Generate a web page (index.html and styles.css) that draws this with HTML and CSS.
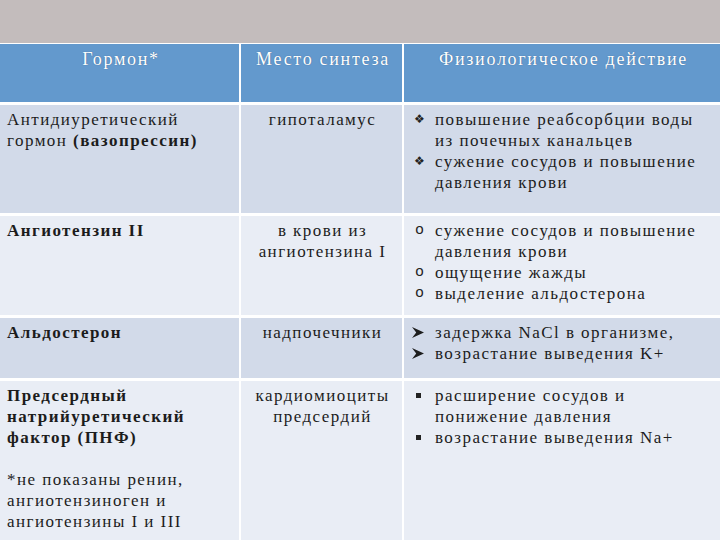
FILE: index.html
```html
<!DOCTYPE html>
<html lang="ru">
<head>
<meta charset="utf-8">
<title>Гормоны</title>
<link rel="stylesheet" href="styles.css">
</head>
<body>
<div class="band"></div>
<table class="grid">
  <colgroup>
    <col class="c1"><col class="c2"><col class="c3">
  </colgroup>
  <thead>
    <tr class="head">
      <th>Гормон*</th>
      <th>Место синтеза</th>
      <th>Физиологическое действие</th>
    </tr>
  </thead>
  <tbody>
    <tr class="odd r1">
      <td>Антидиуретический<br>гормон <b>(вазопрессин)</b></td>
      <td class="mid">гипоталамус</td>
      <td>
        <ul class="list dia">
          <li>повышение реабсорбции воды<br>из почечных канальцев</li>
          <li>сужение сосудов и повышение<br>давления крови</li>
        </ul>
      </td>
    </tr>
    <tr class="even r2">
      <td><b>Ангиотензин II</b></td>
      <td class="mid">в крови из<br>ангиотензина I</td>
      <td>
        <ul class="list circ">
          <li>сужение сосудов и повышение<br>давления крови</li>
          <li>ощущение жажды</li>
          <li>выделение альдостерона</li>
        </ul>
      </td>
    </tr>
    <tr class="odd r3">
      <td><b>Альдостерон</b></td>
      <td class="mid">надпочечники</td>
      <td>
        <ul class="list arrow">
          <li>задержка NaCl в организме,</li>
          <li>возрастание выведения K+</li>
        </ul>
      </td>
    </tr>
    <tr class="even r4">
      <td>
        <p class="name"><b>Предсердный<br>натрийуретический<br>фактор (ПНФ)</b></p>
        <p class="note">*не показаны ренин,<br>ангиотензиноген и<br>ангиотензины I и III</p>
      </td>
      <td class="mid">кардиомиоциты<br>предсердий</td>
      <td>
        <ul class="list sq">
          <li>расширение сосудов и<br>понижение давления</li>
          <li>возрастание выведения Na+</li>
        </ul>
      </td>
    </tr>
  </tbody>
</table>
</body>
</html>
```
FILE: styles.css
```css
html, body {
  margin: 0;
  padding: 0;
  background: #e9edf4;
  overflow: hidden;
}
body {
  width: 720px;
  height: 540px;
  font-family: "Liberation Serif", "DejaVu Serif", serif;
  color: #1c1c1c;
}
.band {
  height: 43px;
  background: #c3bcbc;
}
.grid {
  width: 722px;
  border-collapse: separate;
  border-spacing: 0;
  table-layout: fixed;
  font-size: 17px;
  line-height: 21px;
  letter-spacing: 1.45px;
}
.c1 { width: 241px; }
.c2 { width: 163px; }
.c3 { width: 318px; }
.grid th, .grid td {
  vertical-align: top;
  border-right: 2px solid #ffffff;
  border-bottom: 3px solid #ffffff;
  padding: 4px 4px 0 7px;
  text-align: left;
}
.grid th {
  border-top: 1px solid #ffffff;
  background: #6399cd;
  color: #ffffff;
  font-weight: normal;
  font-size: 18px;
  letter-spacing: 1.7px;
  text-align: center;
  padding-top: 5px;
  text-shadow: 0 0 1px rgba(30, 60, 100, 0.6);
}
.head { height: 62px; }
.head th { height: 57px; box-sizing: border-box; }
.odd td { background: #d2dae9; }
.even td { background: #e9edf5; }
.r1 td { height: 104px; }
.r2 td { height: 95px; }
.r3 td { height: 56px; }
.r4 td { height: 170px; }
.grid td.mid { text-align: center; padding-left: 4px; padding-right: 2px; }
.grid td b { font-weight: bold; }
.list {
  list-style: none;
  margin: 0;
  padding: 0 0 0 24px;
}
.list li { position: relative; }
.list li::before {
  position: absolute;
  left: -22px;
  top: 0;
  letter-spacing: 0;
  font-family: "DejaVu Sans", sans-serif;
  color: #222;
}
.dia li::before { content: "\2756"; font-size: 12px; left: -21px; }
.circ li::before { content: "o"; font-family: "Liberation Mono", monospace; font-size: 15px; left: -20px; }
.arrow li::before {
  content: "";
  width: 12px;
  height: 11px;
  left: -23px;
  top: 5px;
  background: #1e1e1e;
  clip-path: polygon(0 0, 100% 50%, 0 100%, 35% 50%);
}
.sq li::before { content: ""; width: 5px; height: 5px; background: #222; left: -19px; top: 8px; }
.name, .note { margin: 0; }
.note { margin-top: 21px; }
```
